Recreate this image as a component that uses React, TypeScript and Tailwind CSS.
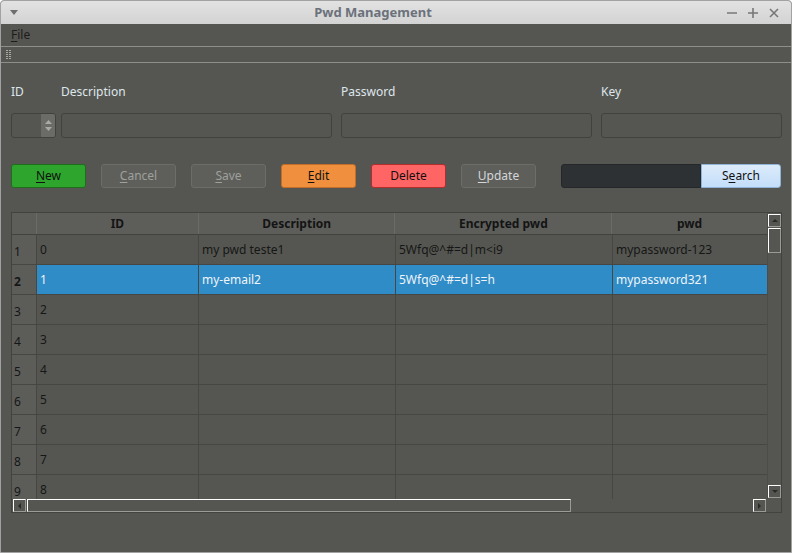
import React from 'react'

const font = { fontFamily: '"Noto Sans", "Open Sans", sans-serif' }

const rows = [
  { id: '0', desc: 'my pwd teste1', enc: '5Wfq@^#=d|m<i9', pwd: 'mypassword-123' },
  { id: '1', desc: 'my-email2', enc: '5Wfq@^#=d|s=h', pwd: 'mypassword321' },
  { id: '2', desc: '', enc: '', pwd: '' },
  { id: '3', desc: '', enc: '', pwd: '' },
  { id: '4', desc: '', enc: '', pwd: '' },
  { id: '5', desc: '', enc: '', pwd: '' },
  { id: '6', desc: '', enc: '', pwd: '' },
  { id: '7', desc: '', enc: '', pwd: '' },
  { id: '8', desc: '', enc: '', pwd: '' },
]

function Btn({ u, rest, cls }: { u: string; rest: string; cls: string }) {
  return (
    <div className={`w-[75px] h-[24px] rounded-[3px] border flex items-center justify-center text-[12px] ${cls}`}>
      <span className="underline underline-offset-2">{u}</span>
      <span>{rest}</span>
    </div>
  )
}

export default function App() {
  return (
    <div style={font} className="w-[792px] h-[553px] bg-[#555651] border border-[#a2a2a2] rounded-t-[4px] flex flex-col overflow-hidden">
      {/* title bar */}
      <div className="h-[23px] shrink-0 bg-gradient-to-b from-[#e2e2e2] to-[#d3d3d3] flex items-center px-[8px] relative">
        <svg width="10" height="6" viewBox="0 0 10 6" className="mt-[1px]">
          <path d="M1 0 L9 0 L5 5 Z" fill="#6e6e6e" />
        </svg>
        <div className="flex-1 text-center text-[13px] font-bold text-[#6b717b]">Pwd Management</div>
        <div className="flex items-center gap-[11px] pr-[4px]">
          <svg width="10" height="10" viewBox="0 0 10 10"><path d="M0 5 H10" stroke="#777" strokeWidth="1.6" /></svg>
          <svg width="10" height="10" viewBox="0 0 10 10"><path d="M0 5 H10 M5 0 V10" stroke="#777" strokeWidth="1.6" /></svg>
          <svg width="10" height="10" viewBox="0 0 10 10"><path d="M1 1 L9 9 M9 1 L1 9" stroke="#777" strokeWidth="1.6" /></svg>
        </div>
      </div>

      {/* menu bar */}
      <div className="h-[22px] shrink-0 flex items-center px-[10px] text-[12px] text-[#1c1c1c]">
        <span className="underline underline-offset-2">F</span>ile
      </div>
      <div className="h-[1px] bg-[#8e8f8a]" />
      <div className="h-[15px] shrink-0 flex items-center pl-[5px]">
        <div className="grid grid-cols-2 gap-[1px]">
          {Array.from({ length: 10 }).map((_, i) => (
            <div key={i} className="w-[2px] h-[1px] bg-[#a8a8a4]" />
          ))}
        </div>
      </div>
      <div className="h-[1px] bg-[#8e8f8a]" />

      {/* labels */}
      <div className="flex mt-[21px] text-[12px] text-[#dfe6ec] h-[16px] items-center">
        <div className="ml-[10px] w-[50px]">ID</div>
        <div className="w-[280px]">Description</div>
        <div className="w-[260px]">Password</div>
        <div>Key</div>
      </div>

      {/* inputs */}
      <div className="flex mt-[13px] h-[25px]">
        <div className="ml-[10px] w-[45px] h-[25px] rounded-[3px] border border-[#41423e] flex justify-end overflow-hidden">
          <div className="w-[14px] h-full bg-[#6b6c68] flex flex-col items-center justify-center gap-[3px]">
            <svg width="7" height="4" viewBox="0 0 7 4"><path d="M0 4 L3.5 0 L7 4 Z" fill="#a9aaa6" /></svg>
            <svg width="7" height="4" viewBox="0 0 7 4"><path d="M0 0 L3.5 4 L7 0 Z" fill="#a9aaa6" /></svg>
          </div>
        </div>
        <div className="ml-[5px] w-[271px] h-[25px] rounded-[3px] border border-[#41423e]" />
        <div className="ml-[9px] w-[251px] h-[25px] rounded-[3px] border border-[#41423e]" />
        <div className="ml-[9px] w-[181px] h-[25px] rounded-[3px] border border-[#41423e]" />
      </div>

      {/* buttons */}
      <div className="flex mt-[26px] pl-[10px] gap-[15px] items-center">
        <Btn u="N" rest="ew" cls="bg-[#2ea62e] border-[#1d6f1d] text-[#111]" />
        <Btn u="C" rest="ancel" cls="bg-[#5e5f5b] border-[#6c6d69] text-[#9fa09c]" />
        <Btn u="S" rest="ave" cls="bg-[#5e5f5b] border-[#6c6d69] text-[#9fa09c]" />
        <Btn u="E" rest="dit" cls="bg-[#f0903e] border-[#c26e28] text-[#111]" />
        <Btn u="" rest="Delete" cls="bg-[#ff6565] border-[#b52c2c] text-[#111]" />
        <Btn u="U" rest="pdate" cls="bg-[#5e5f5b] border-[#6c6d69] text-[#d4d6d8]" />
        <div className="flex ml-[10px]">
          <div className="w-[140px] h-[24px] rounded-l-[3px] bg-[#2d3133] border border-[#25282a]" />
          <div className="w-[80px] h-[24px] rounded-r-[3px] bg-gradient-to-b from-[#dcebfa] to-[#c3defa] border border-[#8fb3d9] flex items-center justify-center text-[12px] text-[#111]">
            S<span className="underline underline-offset-2">e</span>arch
          </div>
        </div>
      </div>

      {/* table */}
      <div className="mx-[10px] mt-[24px] w-[771px] h-[301px] border border-[#42433f] flex flex-col text-[12px]">
        <div className="flex flex-1 min-h-0">
          <div className="w-[756px] flex flex-col overflow-hidden">
            {/* header */}
            <div className="flex h-[22px] shrink-0 bg-[#5d5e5a] text-[#141414] font-bold border-b border-[#42433f]">
              <div className="w-[25px] border-r border-[#6a6b67]" />
              <div className="w-[162px] border-r border-[#6a6b67] flex items-center justify-center">ID</div>
              <div className="w-[197px] border-r border-[#6a6b67] flex items-center justify-center">Description</div>
              <div className="w-[217px] border-r border-[#6a6b67] flex items-center justify-center">Encrypted pwd</div>
              <div className="w-[155px] flex items-center justify-center">pwd</div>
            </div>
            {rows.map((r, i) => {
              const sel = i === 1
              const cell = sel ? 'bg-[#308cc6] text-[#eef4fa]' : 'text-[#161616]'
              return (
                <div key={i} className="flex h-[30px] shrink-0 border-b border-[#464743]">
                  <div className={`w-[25px] shrink-0 bg-[#5c5d59] border-r border-[#464743] flex items-center pl-[2px] text-[#161616] ${sel ? 'font-bold' : ''}`}>
                    <span className="mt-[4px]">{i + 1}</span>
                  </div>
                  <div className={`w-[162px] shrink-0 border-r border-[#464743] flex items-center px-[3px] ${cell}`}>{r.id}</div>
                  <div className={`w-[197px] shrink-0 border-r border-[#464743] flex items-center px-[3px] ${cell}`}>{r.desc}</div>
                  <div className={`w-[217px] shrink-0 border-r border-[#464743] flex items-center px-[3px] ${cell}`}>{r.enc}</div>
                  <div className={`w-[155px] shrink-0 flex items-center px-[3px] ${cell}`}>{r.pwd}</div>
                </div>
              )
            })}
          </div>
          {/* vertical scrollbar */}
          <div className="w-[14px] flex flex-col items-center pt-[1px] pb-[1px] border-l border-[#4c4d49]">
            <div className="w-[13px] h-[13px] border border-t-white border-l-white border-r-[#9a9a96] border-b-[#9a9a96] flex items-center justify-center">
              <svg width="6" height="3" viewBox="0 0 6 3"><path d="M0 3 L3 0 L6 3 Z" fill="#2a2a2a" /></svg>
            </div>
            <div className="w-[13px] h-[25px] mt-[1px] border border-t-white border-l-white border-r-[#9a9a96] border-b-[#9a9a96]" />
            <div className="flex-1" />
            <div className="w-[13px] h-[13px] border border-t-white border-l-white border-r-[#9a9a96] border-b-[#9a9a96] flex items-center justify-center">
              <svg width="6" height="3" viewBox="0 0 6 3"><path d="M0 0 L3 3 L6 0 Z" fill="#2a2a2a" /></svg>
            </div>
          </div>
        </div>
        {/* horizontal scrollbar */}
        <div className="h-[13px] flex items-center shrink-0">
          <div className="ml-[1px] w-[13px] h-[13px] border border-t-white border-l-white border-r-[#9a9a96] border-b-[#9a9a96] flex items-center justify-center">
            <svg width="3" height="6" viewBox="0 0 3 6"><path d="M3 0 L0 3 L3 6 Z" fill="#2a2a2a" /></svg>
          </div>
          <div className="ml-[1px] w-[544px] h-[13px] border border-t-white border-l-white border-r-[#9a9a96] border-b-[#9a9a96]" />
          <div className="flex-1" />
          <div className="w-[13px] h-[13px] border border-t-white border-l-white border-r-[#9a9a96] border-b-[#9a9a96] flex items-center justify-center">
            <svg width="3" height="6" viewBox="0 0 3 6"><path d="M0 0 L3 3 L0 6 Z" fill="#2a2a2a" /></svg>
          </div>
          <div className="w-[15px] h-full" />
        </div>
      </div>
    </div>
  )
}
